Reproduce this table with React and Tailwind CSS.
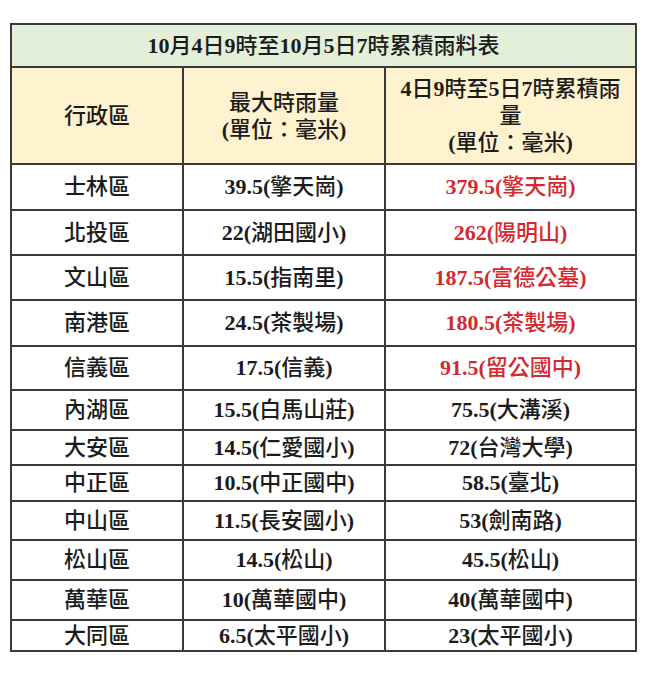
import React from "react";

const rows = [
  { area: "士林區", max: "39.5(擎天崗)", total: "379.5(擎天崗)", red: true, h: "h-[46px]" },
  { area: "北投區", max: "22(湖田國小)", total: "262(陽明山)", red: true, h: "h-[45px]" },
  { area: "文山區", max: "15.5(指南里)", total: "187.5(富德公墓)", red: true, h: "h-[45px]" },
  { area: "南港區", max: "24.5(茶製場)", total: "180.5(茶製場)", red: true, h: "h-[46px]" },
  { area: "信義區", max: "17.5(信義)", total: "91.5(留公國中)", red: true, h: "h-[44px]" },
  { area: "內湖區", max: "15.5(白馬山莊)", total: "75.5(大溝溪)", h: "h-[40px]" },
  { area: "大安區", max: "14.5(仁愛國小)", total: "72(台灣大學)", h: "h-[35px]" },
  { area: "中正區", max: "10.5(中正國中)", total: "58.5(臺北)", h: "h-[36px]" },
  { area: "中山區", max: "11.5(長安國小)", total: "53(劍南路)", h: "h-[39px]" },
  { area: "松山區", max: "14.5(松山)", total: "45.5(松山)", h: "h-[40px]" },
  { area: "萬華區", max: "10(萬華國中)", total: "40(萬華國中)", h: "h-[40px]" },
  { area: "大同區", max: "6.5(太平國小)", total: "23(太平國小)", h: "h-[31px]" },
];

// numbers and brackets in bold serif, chinese in medium sans
function Mixed({ text }) {
  const parts = text.match(/[\u3000-\u9fff\uff00-\uffef]+|[^\u3000-\u9fff\uff00-\uffef]+/g) || [];
  return parts.map((p, i) =>
    /[\u3000-\u9fff\uff00-\uffef]/.test(p) ? (
      <span key={i} className="font-medium">
        {p}
      </span>
    ) : (
      <span key={i} className="font-bold">
        {p}
      </span>
    )
  );
}

export default function App() {
  return (
    <div
      className="w-[670px] h-[680px] bg-white pt-[23px] pl-[10px] text-[#1c1c1c]"
      style={{ fontFamily: '"Liberation Serif", "Noto Sans CJK TC", serif' }}
    >
      <table className="w-[625px] border-collapse border-2 border-[#3a3a3a] text-center text-[22px] table-fixed">
        <colgroup>
          <col className="w-[172px]" />
          <col className="w-[202px]" />
          <col className="w-[251px]" />
        </colgroup>
        <tbody>
          {/* title */}
          <tr className="h-[43px] bg-[#e3efd9]">
            <td colSpan={3} className="border-2 border-[#3a3a3a] leading-none">
              <Mixed text="10月4日9時至10月5日7時累積雨料表" />
            </td>
          </tr>

          {/* header */}
          <tr className="h-[97px] bg-[#fff2cf] leading-[27px]">
            <td className="border-2 border-[#3a3a3a] font-medium">行政區</td>
            <td className="border-2 border-[#3a3a3a]">
              <Mixed text="最大時雨量" />
              <br />
              <Mixed text="(單位：毫米)" />
            </td>
            <td className="border-2 border-[#3a3a3a] px-1">
              <Mixed text="4日9時至5日7時累積雨" />
              <br />
              <Mixed text="量" />
              <br />
              <Mixed text="(單位：毫米)" />
            </td>
          </tr>

          {rows.map((r) => (
            <tr key={r.area} className={`${r.h} leading-none`}>
              <td className="border-2 border-[#3a3a3a] font-medium">{r.area}</td>
              <td className="border-2 border-[#3a3a3a]">
                <Mixed text={r.max} />
              </td>
              <td className={`border-2 border-[#3a3a3a] ${r.red ? "text-[#d42a2f]" : ""}`}>
                <Mixed text={r.total} />
              </td>
            </tr>
          ))}
        </tbody>
      </table>
    </div>
  );
}
